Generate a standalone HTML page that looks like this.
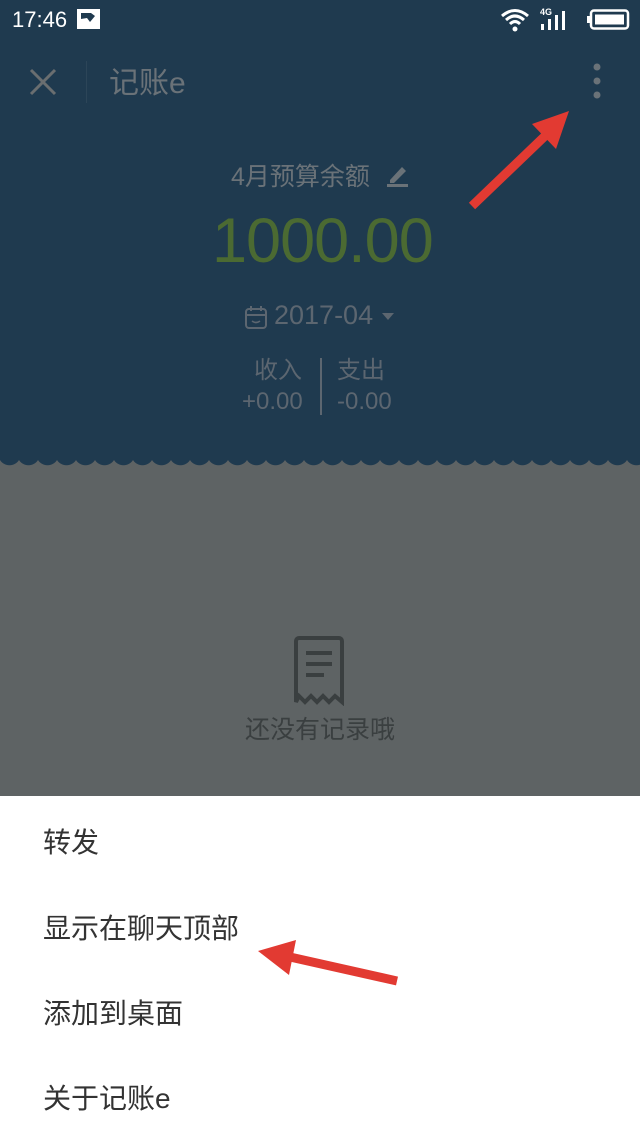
<!DOCTYPE html>
<html><head><meta charset="utf-8"><style>
*{margin:0;padding:0;box-sizing:border-box}
body{width:640px;height:1138px;overflow:hidden;position:relative;background:#5e6364;font-family:"Liberation Sans","Noto Sans CJK SC",sans-serif}
.top{position:absolute;left:0;top:0;width:640px;height:458px;background:#1f3a4f}
.wave{position:absolute;left:0;top:458px;width:640px;height:8px;background:radial-gradient(circle at 9.5px -4px,#1f3a4f 11px,transparent 11.5px);background-size:19px 8px}
.t{position:absolute;white-space:nowrap}
.menu{position:absolute;left:0;top:796px;width:640px;height:342px;background:#fff}
.mi{position:absolute;left:43px;font-size:28px;color:#333}
</style></head><body>
<div class="top"></div>
<div class="wave"></div>
<div class="t" style="left:12px;top:7px;font-size:22px;color:#fff">17:46</div>
<svg style="position:absolute;left:76px;top:8px" width="26" height="22"><rect x="1" y="1" width="23" height="20" fill="#fff"/><path d="M5 5h10l4 3-5 6-3-4-6 1z" fill="#1f3a4f"/></svg>
<svg style="position:absolute;left:500px;top:8px" width="30" height="24"><path d="M2 8Q15-3 28 8" stroke="#fff" stroke-width="3" fill="none"/><path d="M6 12Q15 4 24 12" stroke="#fff" stroke-width="3" fill="none"/><path d="M10 16Q15 11 20 16" stroke="#fff" stroke-width="3" fill="none"/><circle cx="15" cy="21" r="2.5" fill="#fff"/></svg>
<div class="t" style="left:540px;top:7px;font-size:9px;color:#fff;font-weight:bold">4G</div>
<svg style="position:absolute;left:540px;top:10px" width="36" height="22"><rect x="1" y="14" width="3" height="6" fill="#fff"/><rect x="8" y="9" width="3" height="11" fill="#fff"/><rect x="15" y="5" width="3" height="15" fill="#fff"/><rect x="22" y="1" width="3" height="19" fill="#fff"/></svg>
<svg style="position:absolute;left:586px;top:9px" width="44" height="22"><rect x="5" y="1.5" width="37" height="18" rx="3" fill="none" stroke="#fff" stroke-width="2.5"/><rect x="9" y="5.5" width="29" height="10" fill="#fff"/><rect x="1" y="7" width="4" height="7" fill="#fff"/></svg>
<svg style="position:absolute;left:28px;top:67px" width="30" height="30"><path d="M3 3L27 27M27 3L3 27" stroke="#6a6e70" stroke-width="3"/></svg>
<div style="position:absolute;left:86px;top:61px;width:1px;height:42px;background:#2c4558"></div>
<div class="t" style="left:109px;top:58px;font-size:30px;color:#6a7278">记账e</div>
<svg style="position:absolute;left:590px;top:62px" width="14" height="40"><circle cx="7" cy="5" r="3.5" fill="#6a7278"/><circle cx="7" cy="19" r="3.5" fill="#6a7278"/><circle cx="7" cy="33" r="3.5" fill="#6a7278"/></svg>
<div class="t" style="left:231px;top:157px;font-size:25px;color:#6a7278">4月预算余额</div>
<svg style="position:absolute;left:386px;top:162px" width="24" height="26"><path d="M4 18L16 5l4 4L8 21H4z" fill="#6a7278"/><rect x="1" y="22" width="21" height="3" fill="#6a7278"/></svg>
<div class="t" style="left:212px;top:205px;font-size:63px;color:#4b6a32;letter-spacing:-1px">1000.00</div>
<svg style="position:absolute;left:244px;top:305px" width="24" height="26"><rect x="2" y="4" width="20" height="19" rx="3" fill="none" stroke="#5c6670" stroke-width="2"/><path d="M7 1v5M17 1v5M2 10h20" stroke="#5c6670" stroke-width="2"/><path d="M8 16q4 3 8 0" stroke="#5c6670" stroke-width="1.6" fill="none"/></svg>
<div class="t" style="left:274px;top:300px;font-size:27px;color:#5c6670">2017-04</div>
<svg style="position:absolute;left:382px;top:313px" width="12" height="8"><path d="M0 0h12L6 7z" fill="#5c6670"/></svg>
<div class="t" style="left:254px;top:350px;font-size:24px;color:#5c6670">收入</div>
<div class="t" style="left:337px;top:350px;font-size:24px;color:#5c6670">支出</div>
<div style="position:absolute;left:320px;top:358px;width:2px;height:57px;background:#5c6670"></div>
<div class="t" style="left:242px;top:388px;font-size:24px;color:#5c6670">+0.00</div>
<div class="t" style="left:337px;top:388px;font-size:24px;color:#5c6670">-0.00</div>
<svg style="position:absolute;left:292px;top:636px" width="58" height="70"><path d="M4 66V5a3 3 0 013-3h40a3 3 0 013 3v61l-7-6-6 6-6-6-6 6-6-6-6 6-6-6z" fill="none" stroke="#3a3f40" stroke-width="4"/><path d="M14 17h26M14 28h26M14 39h18" stroke="#3a3f40" stroke-width="4"/></svg>
<div class="t" style="left:245px;top:710px;font-size:25px;color:#3a3f40">还没有记录哦</div>
<div class="menu"></div>
<div class="mi" style="top:821px">转发</div>
<div class="mi" style="top:907px">显示在聊天顶部</div>
<div class="mi" style="top:992px">添加到桌面</div>
<div class="mi" style="top:1077px">关于记账e</div>
<svg style="position:absolute;left:0;top:0" width="640" height="1138">
<path d="M472 206L545 136" stroke="#e23a32" stroke-width="9"/>
<path d="M569 111L532 124L556 149Z" fill="#e23a32"/>
<path d="M397 981L290 957" stroke="#e23a32" stroke-width="9"/>
<path d="M258 951L296 940L289 975Z" fill="#e23a32"/>
</svg>
</body></html>
